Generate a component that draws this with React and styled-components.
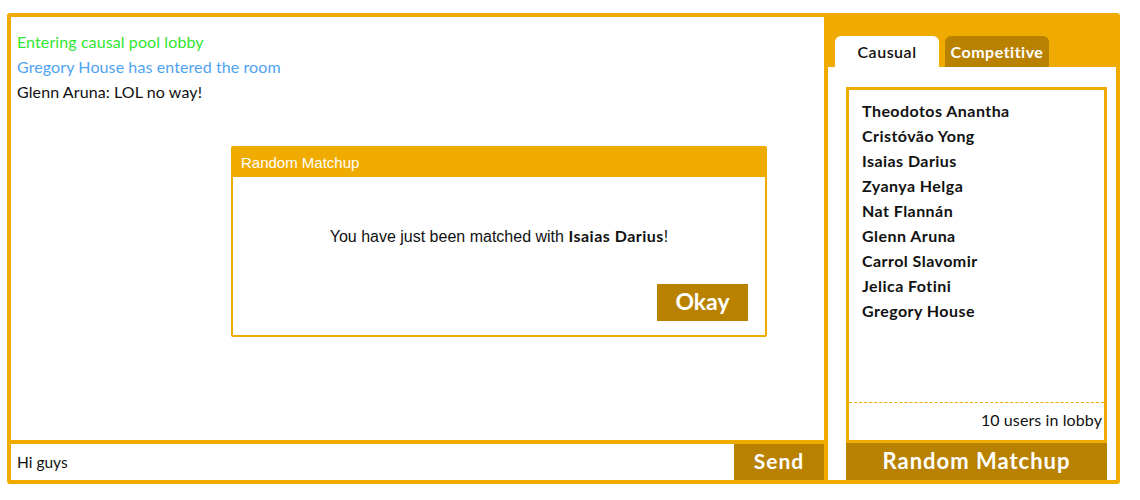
import React from "react";
import styled, { createGlobalStyle } from "styled-components";

const ORANGE = "#f0ab00";
const DARK = "#b88200";
const BODY_FONT = "Lato, 'Open Sans', sans-serif";

const Global = createGlobalStyle`
  html, body { margin: 0; padding: 0; background: #fff; }
  body { font-family: ${BODY_FONT}; color: #111; }
  * { box-sizing: border-box; }
`;

const Frame = styled.div`
  margin: 13px 0 0 7px;
  width: 1113px;
  height: 471px;
  border: 4px solid ${ORANGE};
  border-radius: 3px;
  display: flex;
  background: #fff;
`;

const ChatPanel = styled.section`
  position: relative;
  width: 813px;
  display: flex;
  flex-direction: column;
`;

const Messages = styled.div`
  flex: 1;
  padding: 12px 6px;
  display: flex;
  flex-direction: column;
`;

const Message = styled.div`
  font-size: 16px;
  line-height: 25px;
  letter-spacing: 0.1px;
  color: ${(p) => p.$color || "#111"};
`;

const InputRow = styled.div`
  height: 40px;
  border-top: 4px solid ${ORANGE};
  display: flex;
`;

const ChatInput = styled.div`
  flex: 1;
  padding: 0 6px;
  display: flex;
  align-items: center;
  font-size: 15.5px;
  color: #111;
`;

const SendButton = styled.button`
  width: 90px;
  border: none;
  background: ${DARK};
  color: #fff;
  font-family: ${BODY_FONT};
  font-weight: 700;
  font-size: 21px;
  letter-spacing: 1px;
  padding: 0 0 3px;
`;

const SidePanel = styled.aside`
  flex: 1;
  border-left: 4px solid ${ORANGE};
  display: flex;
  flex-direction: column;
`;

const TabBar = styled.div`
  height: 50px;
  background: ${ORANGE};
  display: flex;
  align-items: flex-end;
  gap: 6px;
  padding-left: 7px;
`;

const Tab = styled.div`
  width: 104px;
  height: 31px;
  border-radius: 6px 6px 0 0;
  background: ${(p) => (p.$active ? "#fff" : DARK)};
  color: ${(p) => (p.$active ? "#111" : "#fff")};
  font-size: 16px;
  letter-spacing: 0.5px;
  font-weight: ${(p) => (p.$active ? 600 : 700)};
  display: flex;
  align-items: center;
  justify-content: center;
  padding-bottom: 1px;
`;

const SideContent = styled.div`
  flex: 1;
  padding: 20px 9px 0 18px;
  display: flex;
  flex-direction: column;
`;

const UserBox = styled.div`
  height: 356px;
  border: 3px solid ${ORANGE};
  display: flex;
  flex-direction: column;
`;

const UserList = styled.ul`
  flex: 1;
  list-style: none;
  margin: 0;
  padding: 8px 13px;
`;

const UserItem = styled.li`
  font-size: 16px;
  font-weight: 700;
  letter-spacing: 0.45px;
  line-height: 25px;
  color: #111;
`;

const LobbyCount = styled.div`
  height: 38px;
  border-top: 1px dashed ${ORANGE};
  display: flex;
  align-items: center;
  justify-content: flex-end;
  padding: 0 2px 4px 0;
  font-size: 16px;
  letter-spacing: 0.1px;
  color: #111;
`;

const MatchButton = styled.button`
  height: 37px;
  border: none;
  background: ${DARK};
  color: #fff;
  font-family: ${BODY_FONT};
  font-weight: 700;
  font-size: 22px;
  letter-spacing: 1px;
  padding: 0 0 2px;
`;

const Dialog = styled.div`
  position: absolute;
  left: 220px;
  top: 129px;
  width: 536px;
  height: 191px;
  border: 2px solid ${ORANGE};
  border-radius: 2px;
  background: #fff;
  display: flex;
  flex-direction: column;
`;

const DialogHeader = styled.div`
  height: 29px;
  background: ${ORANGE};
  color: #fff;
  font-family: "Liberation Sans", Arial, sans-serif;
  font-size: 15px;
  display: flex;
  align-items: center;
  padding-left: 8px;
`;

const DialogBody = styled.div`
  flex: 1;
  display: flex;
  flex-direction: column;
  padding: 0 17px 14px;
`;

const DialogText = styled.p`
  margin: 49px 0 0;
  text-align: center;
  font-family: "Liberation Sans", Arial, sans-serif;
  font-size: 16px;
  color: #111;
  line-height: 20px;
`;

const Name = styled.b`
  font-family: ${BODY_FONT};
  font-weight: 700;
  letter-spacing: 0.5px;
`;

const DialogActions = styled.div`
  margin-top: auto;
  display: flex;
  justify-content: flex-end;
`;

const OkayButton = styled.button`
  width: 91px;
  height: 37px;
  border: none;
  background: ${DARK};
  color: #fff;
  font-family: ${BODY_FONT};
  font-weight: 700;
  font-size: 23px;
  padding: 0 0 3px;
`;

const users = [
  "Theodotos Anantha",
  "Cristóvão Yong",
  "Isaias Darius",
  "Zyanya Helga",
  "Nat Flannán",
  "Glenn Aruna",
  "Carrol Slavomir",
  "Jelica Fotini",
  "Gregory House",
];

export default function App() {
  return (
    <>
      <Global />
      <Frame>
        <ChatPanel>
          <Messages>
            <Message $color="#2fe62f">Entering causal pool lobby</Message>
            <Message $color="#4ea3f2">Gregory House has entered the room</Message>
            <Message>Glenn Aruna: LOL no way!</Message>
          </Messages>
          <InputRow>
            <ChatInput>Hi guys</ChatInput>
            <SendButton>Send</SendButton>
          </InputRow>
          <Dialog>
            <DialogHeader>Random Matchup</DialogHeader>
            <DialogBody>
              <DialogText>
                You have just been matched with <Name>Isaias Darius</Name>!
              </DialogText>
              <DialogActions>
                <OkayButton>Okay</OkayButton>
              </DialogActions>
            </DialogBody>
          </Dialog>
        </ChatPanel>
        <SidePanel>
          <TabBar>
            <Tab $active>Causual</Tab>
            <Tab>Competitive</Tab>
          </TabBar>
          <SideContent>
            <UserBox>
              <UserList>
                {users.map((u) => (
                  <UserItem key={u}>{u}</UserItem>
                ))}
              </UserList>
              <LobbyCount>10 users in lobby</LobbyCount>
            </UserBox>
            <MatchButton>Random Matchup</MatchButton>
          </SideContent>
        </SidePanel>
      </Frame>
    </>
  );
}
